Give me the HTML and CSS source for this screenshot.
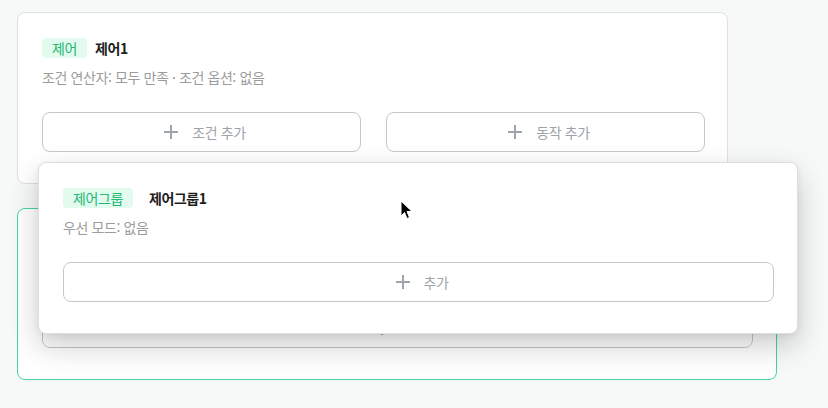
FILE: index.html
```html
<!DOCTYPE html>
<html lang="ko">
<head>
<meta charset="utf-8">
<link rel="stylesheet" href="styles.css">
</head>
<body>
<div class="page">
  <section class="card card-control">
    <div class="head">
      <span class="badge">제어</span>
      <span class="title">제어1</span>
    </div>
    <p class="sub">조건 연산자: 모두 만족 · 조건 옵션: 없음</p>
    <div class="actions">
      <button class="add-btn"><svg class="plus" viewBox="0 0 16 16"><path d="M8 1v14M1 8h14"/></svg><span>조건 추가</span></button>
      <button class="add-btn"><svg class="plus" viewBox="0 0 16 16"><path d="M8 1v14M1 8h14"/></svg><span>동작 추가</span></button>
    </div>
  </section>

  <section class="card card-group active placeholder">
    <div class="head">
      <span class="badge">제어그룹</span>
      <span class="title wide">제어그룹1</span>
    </div>
    <p class="sub">우선 모드: 없음</p>
    <div class="actions single">
      <button class="add-btn"><svg class="plus" viewBox="0 0 16 16"><path d="M8 1v14M1 8h14"/></svg><span class="ghost">추가</span></button>
    </div>

    <div class="card card-group drag-overlay">
      <div class="head">
        <span class="badge">제어그룹</span>
        <span class="title wide">제어그룹1</span>
      </div>
      <p class="sub">우선 모드: 없음</p>
      <div class="actions single">
        <button class="add-btn"><svg class="plus" viewBox="0 0 16 16"><path d="M8 1v14M1 8h14"/></svg><span>추가</span></button>
      </div>
      <svg class="cursor" viewBox="0 0 13 20"><path d="M1 1 L1 16 L4.5 12.5 L7 18.5 L9.5 17.5 L7 11.5 L12 11.5 Z"/></svg>
    </div>
  </section>
</div>
</body>
</html>
```

FILE: styles.css
```css
* { box-sizing: border-box; }
html, body { margin: 0; padding: 0; }
body {
  background: #f7f9f9;
  font-family: "Noto Sans CJK KR", "Noto Sans", sans-serif;
  font-size: 14px;
  letter-spacing: -0.4px;
  width: 828px;
  height: 408px;
  overflow: hidden;
}
.page {
  padding: 12px 17px;
  display: flex;
  flex-direction: column;
  gap: 24px;
}
.card {
  background: #fff;
  border: 1px solid #dde0e4;
  border-radius: 8px;
  padding: 24px 22px 31px 24px;
  height: 172px;
}
.card-control { width: 711px; }
.card-group { width: 760px; padding-right: 23px; position: relative; }
.card-group.active { border-color: #46d3a1; }
.placeholder > .head,
.placeholder > .sub,
.ghost { visibility: hidden; }
.head {
  display: flex;
  align-items: center;
  height: 22px;
}
.badge {
  height: 20px;
  line-height: 20px;
  padding: 0 10px;
  border-radius: 4px;
  background: #e3faee;
  color: #22b873;
  font-size: 14px;
}
.title {
  margin-left: 8px;
  font-weight: 700;
  color: #1e1e1e;
  font-size: 14px;
}
.title.wide { margin-left: 16px; }
.sub {
  margin: 8px 0 0;
  line-height: 20px;
  color: #9c9c9c;
  font-size: 14px;
}
.actions {
  margin-top: 25px;
  display: grid;
  grid-template-columns: 1fr 1fr;
  gap: 25px;
}
.actions.single { grid-template-columns: 1fr; }
.add-btn {
  height: 40px;
  background: #fff;
  border: 1px solid #c3c8cf;
  border-radius: 8px;
  display: flex;
  align-items: center;
  justify-content: center;
  gap: 13px;
  padding: 0 0 0 6px;
  font-family: inherit;
  font-size: 14px;
  letter-spacing: -0.4px;
  color: #9ea3a9;
}
.plus {
  width: 16px;
  height: 16px;
  stroke: #a0a5ab;
  stroke-width: 2;
  fill: none;
}
.drag-overlay {
  position: absolute;
  left: 20px;
  top: -47px;
  width: 760px;
  height: 172px;
  border-color: #dcdfe3;
  box-shadow: 0 12px 30px rgba(0, 0, 0, 0.2), 0 2px 6px rgba(0, 0, 0, 0.06);
  z-index: 10;
}
.cursor {
  position: absolute;
  left: 361px;
  top: 37px;
  width: 13px;
  height: 20px;
  fill: #000;
  stroke: #fff;
  stroke-width: 1;
}
```
